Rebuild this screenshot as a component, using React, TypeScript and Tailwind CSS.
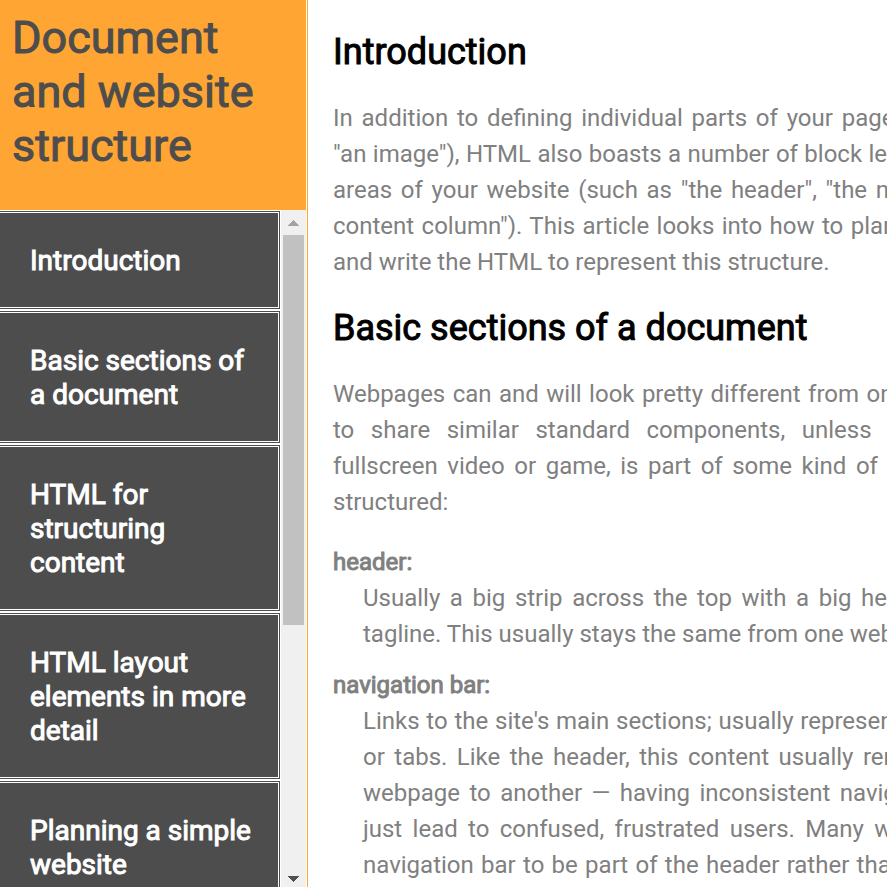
const sections = [
  { id: 'introduction', title: 'Introduction' },
  { id: 'basic-sections', title: 'Basic sections of a document' },
  { id: 'html-structuring', title: 'HTML for structuring content' },
  { id: 'html-layout', title: 'HTML layout elements in more detail' },
  { id: 'planning', title: 'Planning a simple website' },
];

const parts = [
  {
    term: 'header:',
    text: 'Usually a big strip across the top with a big heading, logo, and perhaps a tagline. This usually stays the same from one webpage to another.',
  },
  {
    term: 'navigation bar:',
    text: "Links to the site's main sections; usually represented by menu buttons, links, or tabs. Like the header, this content usually remains consistent from one webpage to another — having inconsistent navigation on your website will just lead to confused, frustrated users. Many web designers consider the navigation bar to be part of the header rather than an individual component, but that's not a requirement.",
  },
];

function Scrollbar() {
  return (
    <div aria-hidden="true" className="flex w-[25px] shrink-0 flex-col items-center bg-[#f0f0f0]">
      <svg className="h-[25px] w-[25px] shrink-0" viewBox="0 0 25 25" fill="#a3a3a3" shapeRendering="crispEdges">
        <path d="M7 16 L12.5 10 L18 16 Z" />
      </svg>
      <div className="h-[390px] w-[21px] bg-[#c1c1c1]" />
      <svg className="mt-auto h-[25px] w-[25px] shrink-0" viewBox="0 0 25 25" fill="#505050" shapeRendering="crispEdges">
        <path d="M7 14 L18 14 L12.5 20 Z" />
      </svg>
    </div>
  );
}

export default function App() {
  return (
    <div className="flex h-screen overflow-hidden bg-white font-['Roboto',sans-serif] text-2xl leading-9 text-[#808080]">
      <nav className="flex w-[308px] shrink-0 flex-col border-r border-[#ffa533] pr-px">
        <header className="h-[210px] shrink-0 bg-[#ffa533] px-3 pt-[11px]">
          <h1 className="text-[45px] leading-[54px] text-[#4d4d4d] [-webkit-text-stroke:1px_#4d4d4d]">
            Document and website structure
          </h1>
        </header>
        <div className="flex min-h-0 flex-1">
          <ul className="min-w-0 flex-1 overflow-y-auto [scrollbar-width:none]">
            {sections.map((s) => (
              <li key={s.id}>
                <a
                  href={'#' + s.id}
                  className="block border-y-3 border-r-3 border-double border-white bg-[#4d4d4d] pt-[31px] pr-[25px] pb-[29px] pl-[30px] text-[28px] leading-[34px] text-white [-webkit-text-stroke:1px_white]"
                >
                  {s.title}
                </a>
              </li>
            ))}
          </ul>
          <Scrollbar />
        </div>
      </nav>
      <main className="min-w-0 flex-1 overflow-hidden pl-[25px]">
        <article className="min-w-[847px]">
          <section id="introduction">
            <h2 className="pt-[31px] text-4xl leading-[42px] text-black [-webkit-text-stroke:1px_black]">Introduction</h2>
            <p className="mt-[27px] text-justify">
              In addition to defining individual parts of your page (such as "a paragraph" or "an image"), HTML also
              boasts a number of block level elements used to define areas of your website (such as "the header", "the
              navigation menu", "the main content column"). This article looks into how to plan a basic website
              structure, and write the HTML to represent this structure.
            </p>
          </section>
          <section id="basic-sections">
            <h2 className="pt-[27px] text-4xl leading-[42px] text-black [-webkit-text-stroke:1px_black]">
              Basic sections of a document
            </h2>
            <p className="mt-[27px] text-justify">
              Webpages can and will look pretty different from one another, but they all tend to share similar standard
              components, unless the page is displaying a fullscreen video or game, is part of some kind of art
              project, or is just badly structured:
            </p>
            <dl className="mt-6 flex flex-col gap-[15px]">
              {parts.map((p) => (
                <div key={p.term}>
                  <dt className="[-webkit-text-stroke:1px_#808080]">{p.term}</dt>
                  <dd className="pl-[30px] text-justify">{p.text}</dd>
                </div>
              ))}
            </dl>
          </section>
        </article>
      </main>
    </div>
  );
}
